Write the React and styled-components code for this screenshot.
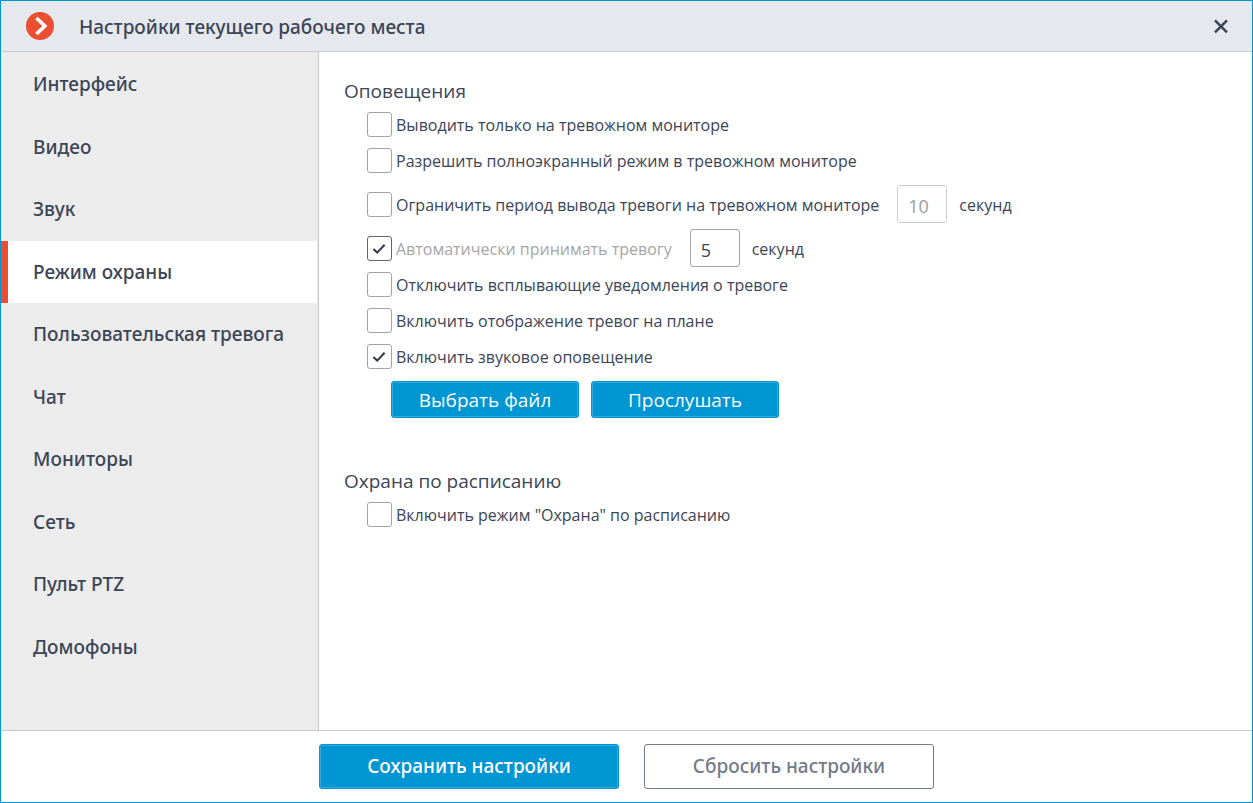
import React, { useState } from "react";
import styled, { createGlobalStyle } from "styled-components";

const GlobalStyle = createGlobalStyle`
  * {
    box-sizing: border-box;
  }

  body {
    margin: 0;
    font-family: 'Open Sans', 'Noto Sans', sans-serif;
    color: #3b4557;
    background: #ffffff;
  }

  button, input {
    font-family: inherit;
    color: inherit;
  }
`

const Window = styled.div`
  display: flex;
  flex-direction: column;
  min-height: 100vh;
  border: 1px solid #0095d3;
  background: #ffffff;
`

const Header = styled.header`
  display: flex;
  align-items: center;
  height: 51px;
  padding: 0 19px 0 25px;
  background: #e5e8ed;
  border-bottom: 1px solid #c8c9cd;
`

const Title = styled.h1`
  flex: 1;
  margin: 0 0 0 25px;
  padding-top: 2px;
  font-family: 'Noto Sans', 'Open Sans', sans-serif;
  font-size: 19px;
  line-height: 24px;
  font-weight: 550;
`

const CloseButton = styled.button`
  display: flex;
  padding: 4px;
  border: 0;
  background: none;
  cursor: pointer;
`

const Body = styled.div`
  display: flex;
  flex: 1;
`

const Sidebar = styled.nav`
  flex: none;
  width: 318px;
  padding: 1px 1px 0 0;
  background: #ececec;
  border-right: 1px solid #c8c9cd;
`

const NavList = styled.ul`
  display: grid;
  grid-auto-rows: 1fr;
  height: 625px;
  margin: 0;
  padding: 0;
  list-style: none;
`

const NavLink = styled.a`
  display: flex;
  align-items: center;
  height: 100%;
  padding-left: 25px;
  border-left: 7px solid ${props => (props.$active ? "#ea4f31" : "transparent")};
  background: ${props => (props.$active ? "#ffffff" : "transparent")};
  color: inherit;
  font-family: 'Noto Sans', 'Open Sans', sans-serif;
  font-size: 19px;
  font-weight: 550;
  line-height: 24px;
  text-decoration: none;
`

const Content = styled.main`
  flex: 1;
  padding: 23px 25px;
`

const Section = styled.section`
  margin-bottom: 47px;
`

const SectionTitle = styled.h2`
  margin: 0;
  font-size: 19px;
  line-height: 32px;
  font-weight: 400;
`

const Options = styled.div`
  padding-left: 23px;
`

const Option = styled.div`
  display: flex;
  align-items: center;
  gap: 12px;
  height: ${props => (props.$tall ? "52px" : "36px")};
  font-size: 16px;
  line-height: 24px;
`

const CheckLabel = styled.label`
  display: flex;
  align-items: center;
  gap: 4px;
  margin-right: 6px;
  color: ${props => (props.$muted ? "#a6a6a8" : "inherit")};
  cursor: pointer;
`

const CheckBox = styled.span`
  display: grid;
  width: 25px;
  height: 25px;
  margin-bottom: 1px;

  > * {
    grid-area: 1 / 1;
  }

  > svg {
    pointer-events: none;
  }
`

const CheckInput = styled.input.attrs({ type: "checkbox" })`
  appearance: none;
  width: 25px;
  height: 25px;
  margin: 0;
  border: 1px solid ${props => (props.$strong ? "#65656a" : "#a3a3a6")};
  border-radius: 3px;
  background: #ffffff;
  cursor: pointer;
`

const NumberField = styled.input.attrs({ type: "text", inputMode: "numeric" })`
  width: 50px;
  height: 38px;
  margin-bottom: 2px;
  padding: 4px 10px 0;
  border: 1px solid #a3a3a6;
  border-radius: 3px;
  background: #ffffff;
  font-size: 18px;

  &:disabled {
    color: #9a9da4;
    border-color: #cfcfd1;
  }
`

const ButtonRow = styled.div`
  display: flex;
  gap: 12px;
  padding: 6px 0 0 24px;
`

const Button = styled.button`
  width: 188px;
  height: 37px;
  padding: 0;
  border: 1px solid #0095d3;
  border-radius: 3px;
  background: #0095d3;
  box-shadow: inset 0 0 0 1px #33aadc;
  color: #ffffff;
  font-size: 19px;
  line-height: 24px;
  cursor: pointer;
`

const SaveButton = styled(Button)`
  width: 300px;
  height: 45px;
  padding-bottom: 2px;
  font-family: 'Noto Sans', 'Open Sans', sans-serif;
  font-weight: 550;
`

const ResetButton = styled(SaveButton)`
  width: 290px;
  border-color: #737b89;
  background: #ffffff;
  box-shadow: none;
  color: #737b89;
`

const Footer = styled.footer`
  display: flex;
  justify-content: center;
  gap: 25px;
  height: 72px;
  padding-top: 13px;
  border-top: 1px solid #c8c9cd;
`

const navItems = [
  "Интерфейс",
  "Видео",
  "Звук",
  "Режим охраны",
  "Пользовательская тревога",
  "Чат",
  "Мониторы",
  "Сеть",
  "Пульт PTZ",
  "Домофоны",
]

const Logo = () => (
  <svg width="28" height="28" viewBox="0 0 28 28" aria-hidden="true">
    <circle cx="14" cy="14" r="14" fill="#ea4f31" />
    <path d="M10.4 6 L18.8 14 L10.4 22" fill="none" stroke="#ffffff" strokeWidth="3.6" />
  </svg>
)

const CloseIcon = () => (
  <svg width="16" height="16" viewBox="0 0 16 16" aria-hidden="true">
    <path d="M2 2.4 L14 14.4 M14 2.4 L2 14.4" fill="none" stroke="#3b4557" strokeWidth="2.6" />
  </svg>
)

const Check = ({ label, checked: initial = false, muted }) => {
  const [checked, setChecked] = useState(initial)

  return (
    <CheckLabel $muted={muted}>
      <CheckBox>
        <CheckInput $strong={muted} checked={checked} onChange={() => setChecked(!checked)} />
        {checked &&
          <svg width="25" height="25" viewBox="0 0 25 25" aria-hidden="true">
            <path d="M6.4 13 L10.2 16.6 L17.6 8.8" fill="none" stroke="#303848" strokeWidth="2" />
          </svg>}
      </CheckBox>
      {label}
    </CheckLabel>
  );
};

export default function App() {
  const [active, setActive] = useState("Режим охраны")

  return (
    <>
      <GlobalStyle />
      <Window>
        <Header>
          <Logo />
          <Title>Настройки текущего рабочего места</Title>
          <CloseButton type="button" aria-label="Закрыть">
            <CloseIcon />
          </CloseButton>
        </Header>
        <Body>
          <Sidebar>
            <NavList>
              {navItems.map(item => (
                <li key={item}>
                  <NavLink href="#" $active={item === active} onClick={() => setActive(item)}>{item}</NavLink>
                </li>
              ))}
            </NavList>
          </Sidebar>
          <Content>
            <Section>
              <SectionTitle>Оповещения</SectionTitle>
              <Options>
                <Option><Check label="Выводить только на тревожном мониторе" /></Option>
                <Option><Check label="Разрешить полноэкранный режим в тревожном мониторе" /></Option>
                <Option $tall>
                  <Check label="Ограничить период вывода тревоги на тревожном мониторе" />
                  <NumberField id="limit" defaultValue="10" disabled />
                  <label htmlFor="limit">секунд</label>
                </Option>
                <Option>
                  <Check label="Автоматически принимать тревогу" checked muted />
                  <NumberField id="accept" defaultValue="5" />
                  <label htmlFor="accept">секунд</label>
                </Option>
                <Option><Check label="Отключить всплывающие уведомления о тревоге" /></Option>
                <Option><Check label="Включить отображение тревог на плане" /></Option>
                <Option><Check label="Включить звуковое оповещение" checked /></Option>
                <ButtonRow>
                  <Button type="button">Выбрать файл</Button>
                  <Button type="button">Прослушать</Button>
                </ButtonRow>
              </Options>
            </Section>
            <Section>
              <SectionTitle>Охрана по расписанию</SectionTitle>
              <Options>
                <Option><Check label={'Включить режим "Охрана" по расписанию'} /></Option>
              </Options>
            </Section>
          </Content>
        </Body>
        <Footer>
          <SaveButton type="button">Сохранить настройки</SaveButton>
          <ResetButton type="button">Сбросить настройки</ResetButton>
        </Footer>
      </Window>
    </>
  );
}
